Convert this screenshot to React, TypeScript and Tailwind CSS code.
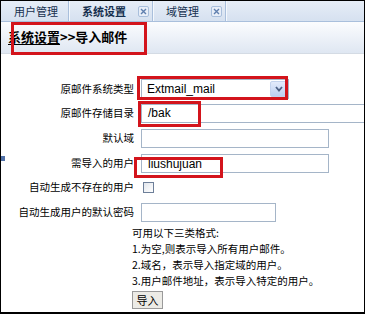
const cjk = "font-['SimSun','Noto_Sans_CJK_SC',sans-serif]";

const CloseIcon = () => (
  <span className="ml-[12px] flex h-[11px] w-[11px] items-center justify-center rounded-[2px] border border-[#a9bfdc] bg-[#e8eef8]">
    <svg width="7" height="7" viewBox="0 0 7 7">
      <path d="M1 1 L6 6 M6 1 L1 6" stroke="#5f7fae" strokeWidth="1.4" />
    </svg>
  </span>
);

const Tab = ({ label, bold, close, width }: { label: string; bold?: boolean; close?: boolean; width: string }) => (
  <div className={`flex h-full items-center border-r border-[#a9bfdc] shadow-[1px_0_0_#f4f8fd] ${width}`}>
    <span className={`pl-[13px] text-[11px] leading-none text-[#16304f] ${cjk} ${bold ? "font-bold" : ""}`}>{label}</span>
    {close && <CloseIcon />}
  </div>
);

const Label = ({ children }: { children: string }) => (
  <div className={`w-[131px] shrink-0 text-right text-[10.5px] leading-none text-black ${cjk}`}>{children}</div>
);

const TextBox = ({ value, width }: { value?: string; width: string }) => (
  <div className={`ml-[7px] flex h-[19px] shrink-0 items-center border border-[#a5b5c8] bg-white pl-[6px] font-['Liberation_Sans',Arial,sans-serif] text-[12px] text-black ${width}`}>
    {value}
  </div>
);

const RedBox = ({ cls }: { cls: string }) => (
  <div className={`pointer-events-none absolute border-[3px] border-[#d3141c] ${cls}`} />
);

export default function App() {
  return (
    <div className="relative h-[314px] w-[365px] overflow-hidden border border-b-2 border-black bg-white">
      {/* tab strip */}
      <div className="flex h-[21px] border-b border-[#a9bfdc] bg-gradient-to-b from-[#e6edf7] to-[#d6e1f0]">
        <Tab label="用户管理" width="w-[68px]" />
        <Tab label="系统设置" bold close width="w-[84px]" />
        <Tab label="域管理" close width="w-[73px]" />
      </div>

      {/* header */}
      <div className="flex h-[32px] items-center border-b border-[#d4dbe4] bg-gradient-to-b from-[#fbfcfe] to-[#dfe7f2] pb-[3px] pl-[7px]">
        <span className={`text-[13px] font-bold leading-none text-black ${cjk}`}>
          <span className="underline underline-offset-2">系统设置</span>&gt;&gt;导入邮件
        </span>
      </div>

      {/* body */}
      <div className="flex">
        <div className="relative ml-[1px] h-[260px] w-[3px] bg-[#a7bcd9]">
          <div className="absolute left-[-1px] top-[102px] h-[5px] w-[4px] bg-[#4f6fa6]" />
        </div>
        <div className="flex flex-1 flex-col pl-[1px] pt-[24px]">
          <div className="flex h-[22px] items-center">
            <Label>原邮件系统类型</Label>
            <div className="ml-[7px] flex h-[20px] w-[148px] items-center border border-[#a5b5c8] bg-white">
              <span className="flex-1 pl-[5px] font-['Liberation_Sans',Arial,sans-serif] text-[12px] text-black">Extmail_mail</span>
              <span className="mr-[1px] flex h-[16px] w-[17px] items-center justify-center rounded-[2px] border border-[#c3d3ee] bg-gradient-to-b from-[#e3ebfb] to-[#bcd0f2]">
                <svg width="8" height="6" viewBox="0 0 8 6">
                  <path d="M1 1 L4 4.5 L7 1" fill="none" stroke="#4d6185" strokeWidth="1.8" />
                </svg>
              </span>
            </div>
          </div>
          <div className="flex h-[26px] items-center">
            <Label>原邮件存储目录</Label>
            <TextBox value="/bak" width="w-[240px]" />
          </div>
          <div className="flex h-[25px] items-center">
            <Label>默认域</Label>
            <TextBox width="w-[188px]" />
          </div>
          <div className="flex h-[25px] items-center">
            <Label>需导入的用户</Label>
            <TextBox value="liushujuan" width="w-[188px]" />
          </div>
          <div className="flex h-[23px] items-center">
            <Label>自动生成不存在的用户</Label>
            <div className="ml-[9px] h-[11px] w-[11px] border border-[#6d7f99] bg-gradient-to-br from-[#e2e6ec] to-white" />
          </div>
          <div className="flex h-[26px] items-center">
            <Label>自动生成用户的默认密码</Label>
            <TextBox width="w-[135px]" />
          </div>
          <div className={`ml-[129px] flex flex-col text-[10.5px] leading-[16px] text-black ${cjk}`}>
            <div>可用以下三类格式:</div>
            <div>1.为空,则表示导入所有用户邮件。</div>
            <div>2.域名，表示导入指定域的用户。</div>
            <div>3.用户邮件地址，表示导入特定的用户。</div>
            <button className="mt-[2px] flex h-[18px] w-[31px] items-center justify-center border border-[#9a9a9a] bg-[#ecebe6] text-[11px] leading-none text-black">
              导入
            </button>
          </div>
        </div>
      </div>

      <RedBox cls="left-[10px] top-[21px] h-[33px] w-[136px]" />
      <RedBox cls="left-[136px] top-[75px] h-[24px] w-[151px]" />
      <RedBox cls="left-[137px] top-[100px] h-[26px] w-[63px]" />
      <RedBox cls="left-[133px] top-[156px] h-[21px] w-[89px]" />
    </div>
  );
}
